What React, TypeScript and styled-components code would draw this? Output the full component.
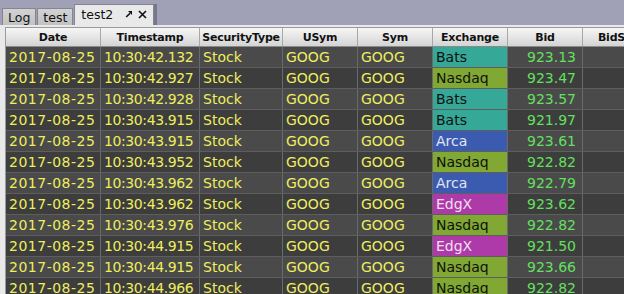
import React from "react";
import styled, { createGlobalStyle } from "styled-components";

interface Quote {
  date: string;
  time: string;
  type: string;
  usym: string;
  sym: string;
  exchange: string;
  bid: string;
}

const GlobalStyle = createGlobalStyle`
  html, body {
    margin: 0;
    padding: 0;
    background: #a0a0b6;
    overflow: hidden;
  }
`;

const exchangeColors: Record<string, { bg: string; fg: string }> = {
  Bats: { bg: "#35a898", fg: "#101010" },
  Nasdaq: { bg: "#80a832", fg: "#101010" },
  Arca: { bg: "#3b5bb0", fg: "#e4e4f0" },
  EdgX: { bg: "#ad3aa8", fg: "#f0e0f0" },
};

const columns = "95px 99px 83px 75px 75px 75px 75px 75px";

const Window = styled.div`
  width: 624px;
  height: 294px;
  display: flex;
  flex-direction: column;
  font-family: "DejaVu Sans", "Liberation Sans", sans-serif;
  overflow: hidden;
`;

const TabBar = styled.div`
  height: 25px;
  display: flex;
  align-items: flex-end;
  padding-left: 2px;
  background: #a0a0b6;
  flex-shrink: 0;
`;

const Tab = styled.div<{ $active?: boolean }>`
  box-sizing: border-box;
  height: ${(p) => (p.$active ? "21px" : "17px")};
  padding: ${(p) => (p.$active ? "0 6px 2px 6px" : "0 5px")};
  margin-right: 1px;
  display: flex;
  align-items: center;
  font-size: 12.5px;
  color: #111;
  border: 1px solid #85858f;
  border-bottom: none;
  background: ${(p) =>
    p.$active ? "#e9e9e9" : "linear-gradient(#d2d2d2, #c2c2c2)"};
  box-shadow: ${(p) => (p.$active ? "3px 0 0 #76768c" : "none")};
`;

const TabIcons = styled.span`
  display: flex;
  align-items: center;
  gap: 5px;
  margin-left: 12px;
`;

const Panel = styled.div`
  flex: 1;
  background: #e9e9e9;
  padding: 2px 0 0 5px;
  overflow: hidden;
`;

const Table = styled.div`
  border-left: 1px solid #9a9a9a;
  border-top: 1px solid #9a9a9a;
  width: max-content;
`;

const HeaderRow = styled.div`
  display: grid;
  grid-template-columns: ${columns};
  height: 19px;
  background: linear-gradient(#f6f6f6, #e2e2e2 60%, #d4d4d4);
  border-bottom: 1px solid #8a8a8a;
  box-sizing: border-box;
`;

const HeaderCell = styled.div`
  display: flex;
  align-items: center;
  justify-content: center;
  font-size: 11px;
  font-weight: bold;
  letter-spacing: -0.2px;
  color: #111;
  border-right: 1px solid #a8a8a8;
  white-space: nowrap;
  overflow: hidden;
`;

const Row = styled.div<{ $odd: boolean }>`
  display: grid;
  grid-template-columns: ${columns};
  height: 21px;
  box-sizing: border-box;
  background: ${(p) => (p.$odd ? "#3d3d3d" : "#4a4a4a")};
  border-bottom: 1px solid #5e5e5e;
`;

const Cell = styled.div<{
  $color?: string;
  $bg?: string;
  $right?: boolean;
  $spacing?: string;
}>`
  display: flex;
  align-items: center;
  justify-content: ${(p) => (p.$right ? "flex-end" : "flex-start")};
  padding: ${(p) => (p.$right ? "0 6px 0 0" : "0 0 0 3px")};
  font-size: 14px;
  letter-spacing: ${(p) => p.$spacing || "0"};
  color: ${(p) => p.$color || "#eeee5e"};
  background: ${(p) => p.$bg || "transparent"};
  border-right: 1px solid #6a6a6a;
  white-space: nowrap;
  overflow: hidden;
`;

const quotes: Quote[] = [
  ["10:30:42.132", "Bats", "923.13"],
  ["10:30:42.927", "Nasdaq", "923.47"],
  ["10:30:42.928", "Bats", "923.57"],
  ["10:30:43.915", "Bats", "921.97"],
  ["10:30:43.915", "Arca", "923.61"],
  ["10:30:43.952", "Nasdaq", "922.82"],
  ["10:30:43.962", "Arca", "922.79"],
  ["10:30:43.962", "EdgX", "923.62"],
  ["10:30:43.976", "Nasdaq", "922.82"],
  ["10:30:44.915", "EdgX", "921.50"],
  ["10:30:44.915", "Nasdaq", "923.66"],
  ["10:30:44.966", "Nasdaq", "922.82"],
].map(([time, exchange, bid]) => ({
  date: "2017-08-25",
  time,
  type: "Stock",
  usym: "GOOG",
  sym: "GOOG",
  exchange,
  bid,
}));

const headers = [
  "Date",
  "Timestamp",
  "SecurityType",
  "USym",
  "Sym",
  "Exchange",
  "Bid",
  "BidSize",
];

const PopoutIcon = () => (
  <svg width="8" height="8" viewBox="0 0 8 8">
    <path d="M3 1 H7 V5 Z" fill="#111" />
    <path d="M1.2 7 L5 3.2" stroke="#111" strokeWidth="1.6" />
  </svg>
);

const CloseIcon = () => (
  <svg width="9" height="9" viewBox="0 0 9 9">
    <path d="M1 1 L8 8 M8 1 L1 8" stroke="#111" strokeWidth="1.6" />
  </svg>
);

export default function App() {
  return (
    <>
      <GlobalStyle />
      <Window>
        <TabBar>
          <Tab>Log</Tab>
          <Tab>test</Tab>
          <Tab $active>
            test2
            <TabIcons>
              <PopoutIcon />
              <CloseIcon />
            </TabIcons>
          </Tab>
        </TabBar>
        <Panel>
          <Table>
            <HeaderRow>
              {headers.map((h) => (
                <HeaderCell key={h}>{h}</HeaderCell>
              ))}
            </HeaderRow>
            {quotes.map((q, i) => {
              const ex = exchangeColors[q.exchange];
              return (
                <Row key={i} $odd={i % 2 === 1}>
                  <Cell $spacing="0.5px">{q.date}</Cell>
                  <Cell $spacing="-0.4px">{q.time}</Cell>
                  <Cell>{q.type}</Cell>
                  <Cell>{q.usym}</Cell>
                  <Cell>{q.sym}</Cell>
                  <Cell $bg={ex.bg} $color={ex.fg}>
                    {q.exchange}
                  </Cell>
                  <Cell $right $color="#62e05e">
                    {q.bid}
                  </Cell>
                  <Cell />
                </Row>
              );
            })}
          </Table>
        </Panel>
      </Window>
    </>
  );
}
